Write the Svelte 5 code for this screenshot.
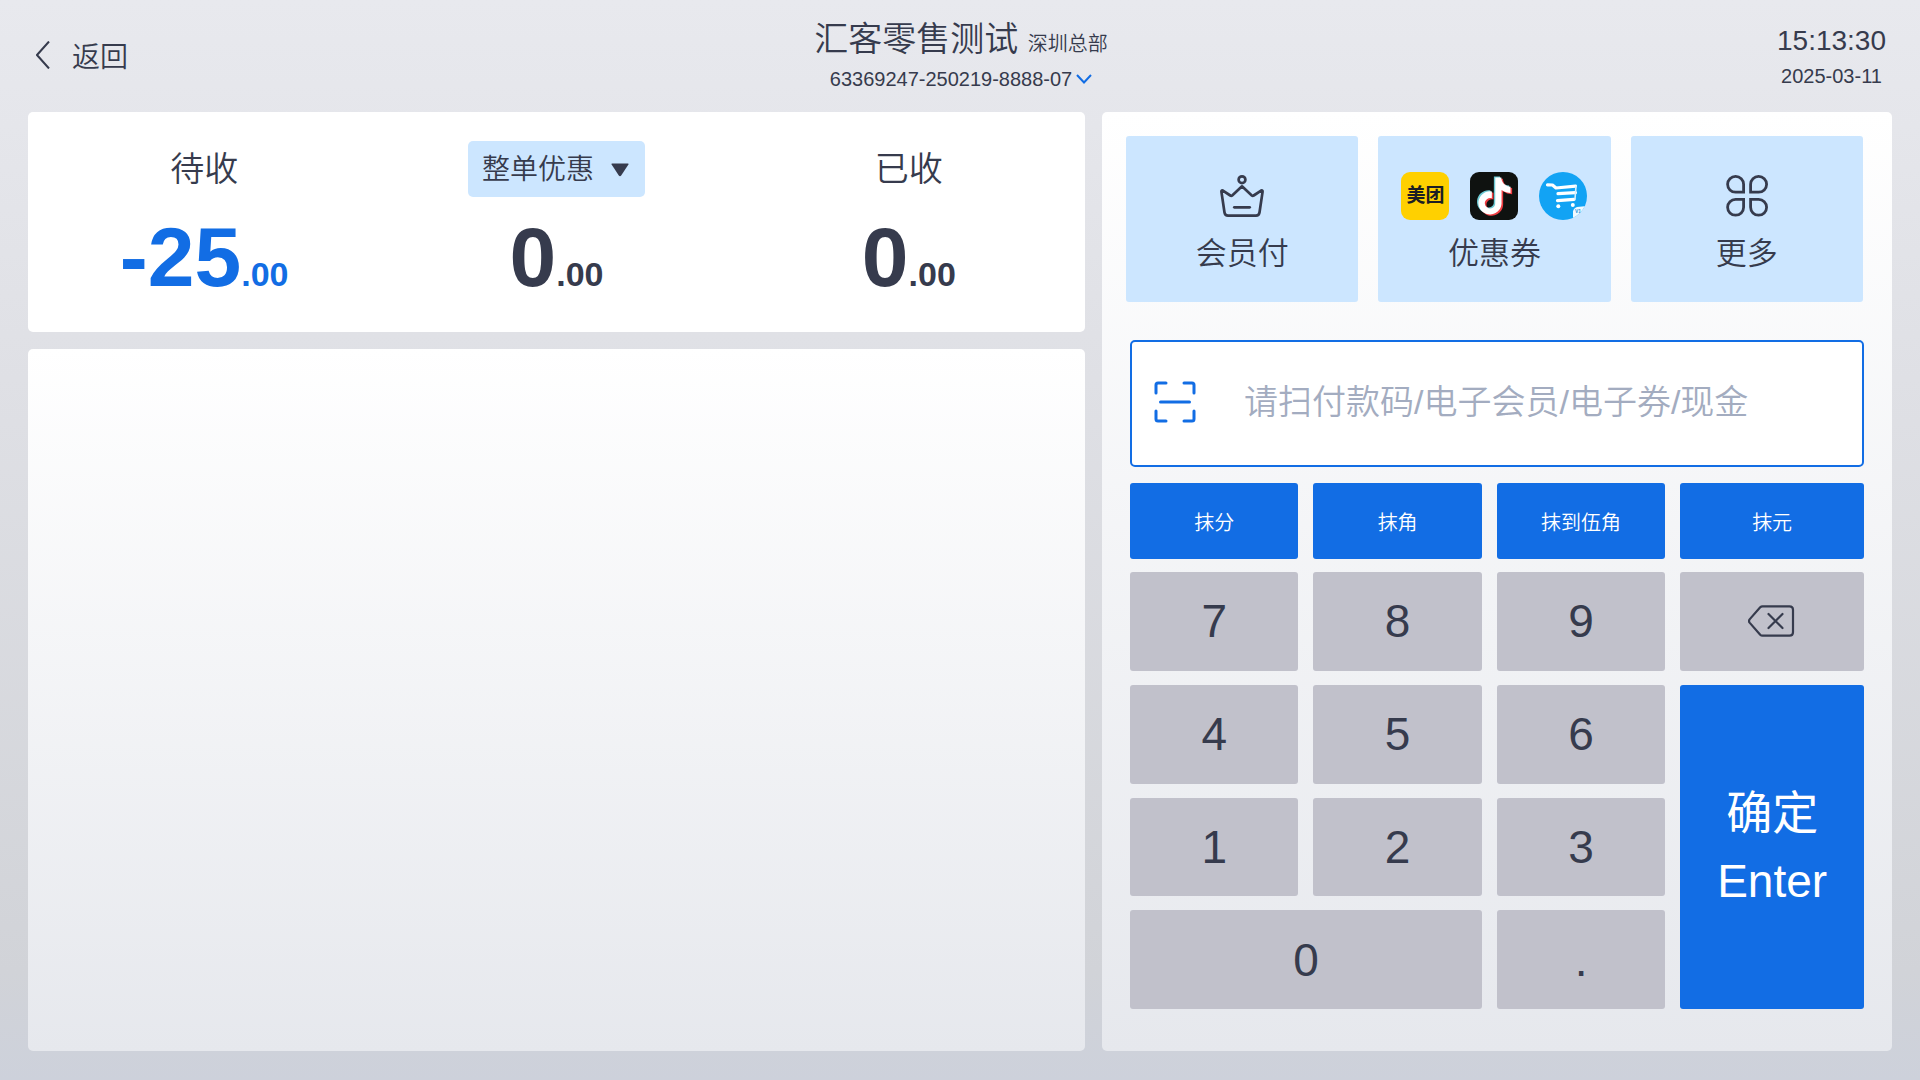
<script>
  let payCode = $state("");

  const store = { name: "汇客零售测试", branch: "深圳总部", terminal: "63369247-250219-8888-07" };
  const clock = { time: "15:13:30", date: "2025-03-11" };

  const roundings = ["抹分", "抹角", "抹到伍角", "抹元"];
  const keys = ["7", "8", "9", "back", "4", "5", "6", "enter", "1", "2", "3", "0", "."];

  const notePath =
    "M12.525.02c1.31-.02 2.61-.01 3.91-.02.08 1.53.63 3.09 1.75 4.17 1.12 1.11 2.7 1.62 4.24 1.79v4.03c-1.44-.05-2.89-.35-4.2-.97-.57-.26-1.1-.59-1.62-.93-.01 2.92.01 5.84-.02 8.75-.08 1.4-.54 2.79-1.35 3.94-1.31 1.92-3.58 3.17-5.91 3.21-1.43.08-2.86-.31-4.08-1.03-2.02-1.19-3.44-3.37-3.65-5.71-.02-.5-.03-1-.01-1.49.18-1.9 1.12-3.72 2.58-4.96 1.66-1.44 3.98-2.13 6.15-1.72.02 1.48-.04 2.96-.04 4.44-.99-.32-2.15-.23-3.02.37-.63.41-1.11 1.04-1.36 1.75-.21.51-.15 1.07-.14 1.61.24 1.64 1.82 3.02 3.5 2.87 1.12-.01 2.19-.66 2.77-1.61.19-.33.4-.67.41-1.06.1-1.79.06-3.57.07-5.36.01-4.03-.01-8.05.02-12.07z";

  function press(key) {
    if (key === "back") {
      payCode = payCode.slice(0, -1);
    } else if (key !== "enter") {
      payCode += key;
    }
  }
</script>

{#snippet amount(whole, cents)}
  <div class="amount">{whole}<span class="cents">.{cents}</span></div>
{/snippet}

<div class="page">
  <header class="header">
    <button class="back-btn">
      <svg width="14" height="28" viewBox="0 0 14 28" fill="none" stroke="currentColor" stroke-width="2">
        <path d="M13 0.5L1 14L13 27.5" />
      </svg>
      返回
    </button>
    <div class="store">
      <h1 class="store-name">{store.name} <small>{store.branch}</small></h1>
      <button class="terminal-btn">
        {store.terminal}
        <svg width="16" height="10" viewBox="0 0 16 10" fill="none" stroke="#126de4" stroke-width="2">
          <path d="M1 1L8 8.5L15 1" />
        </svg>
      </button>
    </div>
    <div class="clock">
      <div class="time">{clock.time}</div>
      <div class="date">{clock.date}</div>
    </div>
  </header>

  <main class="main">
    <section class="left">
      <div class="card summary">
        <div class="total due">
          <div class="label">待收</div>
          {@render amount("-25", "00")}
        </div>
        <div class="total">
          <div class="discount">
            <select class="discount-select" aria-label="整单优惠">
              <option>整单优惠</option>
            </select>
            <svg class="discount-arrow" width="18" height="14" viewBox="0 0 18 14" fill="currentColor">
              <path d="M1.2 0.5H16.8Q18 0.5 17.4 1.6L10.2 12.4Q9 14 7.8 12.4L0.6 1.6Q0 0.5 1.2 0.5Z" />
            </svg>
          </div>
          {@render amount("0", "00")}
        </div>
        <div class="total">
          <div class="label">已收</div>
          {@render amount("0", "00")}
        </div>
      </div>
      <div class="card records"></div>
    </section>

    <section class="card right">
      <div class="methods">
        <button class="method">
          <svg width="48" height="48" viewBox="0 0 48 48" fill="none" stroke="currentColor" stroke-width="2.7" stroke-linecap="round" stroke-linejoin="round">
            <circle cx="24" cy="7.7" r="3.4" />
            <path d="M24 14.3L14.2 23.4Q13.3 24.2 12.3 23.5L4.9 18.6Q3.2 17.9 3.4 19.6L6.5 40.5Q7 43.6 10 43.6H38Q41 43.6 41.5 40.5L44.6 19.6Q44.8 17.9 43.1 18.6L35.7 23.5Q34.7 24.2 33.8 23.4Z" />
            <path d="M16.3 35.3H31.7" />
          </svg>
          会员付
        </button>
        <button class="method">
          <span class="logos">
            <span class="meituan">美团</span>
            <svg width="48" height="48" viewBox="0 0 48 48">
              <rect width="48" height="48" rx="9" fill="#0f1210" />
              <path transform="translate(4.6 4.4) scale(1.54)" fill="#6cc9d3" d={notePath} />
              <path transform="translate(7.6 6.8) scale(1.54)" fill="#f03e43" d={notePath} />
              <path transform="translate(6 5.5) scale(1.54)" fill="#fff" d={notePath} />
            </svg>
            <svg width="48" height="48" viewBox="0 0 48 48">
              <defs>
                <clipPath id="cart-disc"><circle cx="24" cy="24" r="24" /></clipPath>
              </defs>
              <circle cx="24" cy="24" r="24" fill="#12a3f4" />
              <g fill="none" stroke="#fff" stroke-width="3.2" stroke-linecap="round" stroke-linejoin="round">
                <path d="M8.5 12.8L13.5 13L17 16L36.5 14.2" />
                <path d="M19 21.6L36.5 20.6" />
                <path d="M18.5 28.6L35 27.4" />
                <path d="M37 14.4L36 27" stroke-width="1.6" stroke="#d3eefd" />
              </g>
              <circle cx="19.3" cy="34.3" r="2" fill="#fff" />
              <circle cx="33.8" cy="33" r="2" fill="#fff" />
              <g clip-path="url(#cart-disc)">
                <path d="M34 48V39.5Q34.5 36 38 35L48 34V48Z" fill="#f2faff" />
                <text x="36" y="41" font-size="5" font-weight="700" fill="#2a90d8">V1</text>
              </g>
            </svg>
          </span>
          优惠券
        </button>
        <button class="method">
          <svg width="48" height="48" viewBox="0 0 48 48" fill="none" stroke="currentColor" stroke-width="2.8">
            <path d="M20.6 20.2H12.6A8 7.9 0 1 1 20.6 12.3Z" />
            <path d="M27.6 20.2H35.6A8 7.9 0 1 0 27.6 12.3Z" />
            <path d="M20.6 27.4H12.6A8 7.9 0 1 0 20.6 35.3Z" />
            <path d="M27.6 27.4H35.6A8 7.9 0 1 1 27.6 35.3Z" />
          </svg>
          更多
        </button>
      </div>

      <div class="checkout">
        <label class="scan-box">
          <svg width="42" height="42" viewBox="0 0 42 42" fill="none" stroke="#126de4" stroke-width="3" stroke-linecap="round" stroke-linejoin="round">
            <path d="M2 12V4Q2 2 4 2H12M30 2H38Q40 2 40 4V12M40 30V38Q40 40 38 40H30M12 40H4Q2 40 2 38V30" />
            <path d="M6.5 21H35.5" />
          </svg>
          <input
            class="scan-input"
            type="text"
            aria-label="付款码"
            bind:value={payCode}
            placeholder="请扫付款码/电子会员/电子券/现金"
          />
        </label>

        <div class="roundings">
          {#each roundings as rounding}
            <button class="rounding">{rounding}</button>
          {/each}
        </div>

        <div class="keypad">
          {#each keys as key}
            <button
              class="key"
              class:enter={key === "enter"}
              class:wide={key === "0"}
              onclick={() => press(key)}
              aria-label={key === "back" ? "退格" : undefined}
            >
              {#if key === "back"}
                <svg width="48" height="32" viewBox="0 0 48 32" fill="none" stroke="currentColor" stroke-width="2.2" stroke-linecap="round" stroke-linejoin="round">
                  <path d="M14.5 1.3H41.5Q45 1.3 45 4.8V27.2Q45 30.7 41.5 30.7H14.5Q13.2 30.7 12.2 29.7L1.6 17.6Q0.4 16 1.6 14.4L12.2 2.3Q13.2 1.3 14.5 1.3Z" />
                  <path d="M20.5 9L34.5 23M34.5 9L20.5 23" />
                </svg>
              {:else if key === "enter"}
                <span>确定</span>
                <span>Enter</span>
              {:else}
                {key}
              {/if}
            </button>
          {/each}
        </div>
      </div>
    </section>
  </main>
</div>

<style>
  .page {
    display: flex;
    flex-direction: column;
    box-sizing: border-box;
    min-height: 100vh;
    padding: 0 28px 29px;
    background: linear-gradient(180deg, #e8e9ee 0%, #dfe0e5 35%, #d1d3d8 90%, #cdd1db 100%);
    color: #363b4d;
    font-family: "Liberation Sans", "Noto Sans CJK SC", sans-serif;
    font-weight: 350;
  }

  button,
  select,
  input {
    border: none;
    margin: 0;
    padding: 0;
    background: none;
    color: inherit;
    font: inherit;
  }

  button {
    cursor: pointer;
  }

  .header {
    display: grid;
    grid-template-columns: 1fr auto 1fr;
    height: 112px;
    padding: 0 6px 0 8px;
  }

  .back-btn {
    display: flex;
    align-items: center;
    justify-self: start;
    gap: 22px;
    height: 110px;
    font-size: 28px;
  }

  .store {
    display: flex;
    flex-direction: column;
    align-items: center;
    padding-top: 18px;
  }

  .store-name {
    margin: 0;
    font-size: 34px;
    font-weight: inherit;
    line-height: 42px;
  }

  .store-name small {
    font-size: 20px;
  }

  .terminal-btn {
    display: flex;
    align-items: center;
    gap: 4px;
    font-size: 20px;
    line-height: 28px;
  }

  .clock {
    justify-self: end;
    padding-top: 20px;
    text-align: center;
  }

  .time {
    font-size: 28px;
    line-height: 42px;
  }

  .date {
    font-size: 20px;
    line-height: 28px;
  }

  .main {
    display: grid;
    grid-template-columns: 1057fr 790fr;
    flex: 1;
    gap: 17px;
  }

  .card {
    border-radius: 5px;
    background: linear-gradient(180deg, #fff, #e6e8ed);
  }

  .left {
    display: flex;
    flex-direction: column;
    gap: 17px;
  }

  .summary {
    display: grid;
    grid-template-columns: repeat(3, 1fr);
    height: 220px;
    background: #fff;
  }

  .records {
    flex: 1;
  }

  .total {
    display: flex;
    flex-direction: column;
    align-items: center;
    padding-top: 29px;
  }

  .label {
    font-size: 34px;
    line-height: 56px;
  }

  .discount {
    position: relative;
    display: flex;
    border-radius: 5px;
    background: #cce6ff;
  }

  .discount-select {
    appearance: none;
    height: 56px;
    padding: 0 50px 0 14px;
    font-size: 28px;
    cursor: pointer;
  }

  .discount-arrow {
    position: absolute;
    top: 22px;
    right: 16px;
    pointer-events: none;
  }

  .amount {
    font-size: 84px;
    font-weight: 700;
    line-height: 121px;
  }

  .due .amount {
    color: #126de4;
  }

  .cents {
    font-size: 34px;
  }

  .right {
    display: flex;
    flex-direction: column;
    padding: 24px 28px 42px 24px;
  }

  .methods {
    display: grid;
    grid-template-columns: repeat(3, 1fr);
    gap: 20px;
    padding-right: 1px;
  }

  .method {
    display: flex;
    flex-direction: column;
    align-items: center;
    gap: 14px;
    height: 166px;
    padding-top: 36px;
    border-radius: 3px;
    background: #cce6ff;
    font-size: 31px;
    line-height: 40px;
  }

  .logos {
    display: flex;
    gap: 21px;
  }

  .meituan {
    width: 48px;
    height: 48px;
    border-radius: 9px;
    background: #ffd000;
    color: #1c1e24;
    font-size: 19px;
    font-weight: 700;
    line-height: 48px;
    text-align: center;
  }

  .checkout {
    display: flex;
    flex-direction: column;
    flex: 1;
    padding: 38px 0 0 4px;
  }

  .scan-box {
    display: flex;
    align-items: center;
    gap: 48px;
    box-sizing: border-box;
    height: 127px;
    padding: 0 22px 3px;
    border: 2px solid #126de4;
    border-radius: 5px;
    background: #fff;
  }

  .scan-input {
    flex: 1;
    min-width: 0;
    height: 60px;
    outline: none;
    font-size: 34px;
  }

  .scan-input::placeholder {
    color: #a3acc0;
    opacity: 1;
  }

  .roundings,
  .keypad {
    display: grid;
    grid-template-columns: 11fr 11fr 11fr 12fr;
    column-gap: 15px;
  }

  .roundings {
    margin: 16px 0 13px;
  }

  .rounding {
    height: 76px;
    border-radius: 3px;
    background: #126de4;
    color: #fff;
    font-size: 20px;
  }

  .keypad {
    flex: 1;
    grid-template-rows: repeat(4, 1fr);
    row-gap: 14px;
  }

  .key {
    display: flex;
    align-items: center;
    justify-content: center;
    border-radius: 3px;
    background: #c1c1cb;
    font-size: 46px;
  }

  .key.wide {
    grid-column: span 2;
  }

  .key.enter {
    flex-direction: column;
    grid-row: span 3;
    background: #126de4;
    color: #fff;
    font-weight: 400;
    line-height: 68px;
  }
</style>
